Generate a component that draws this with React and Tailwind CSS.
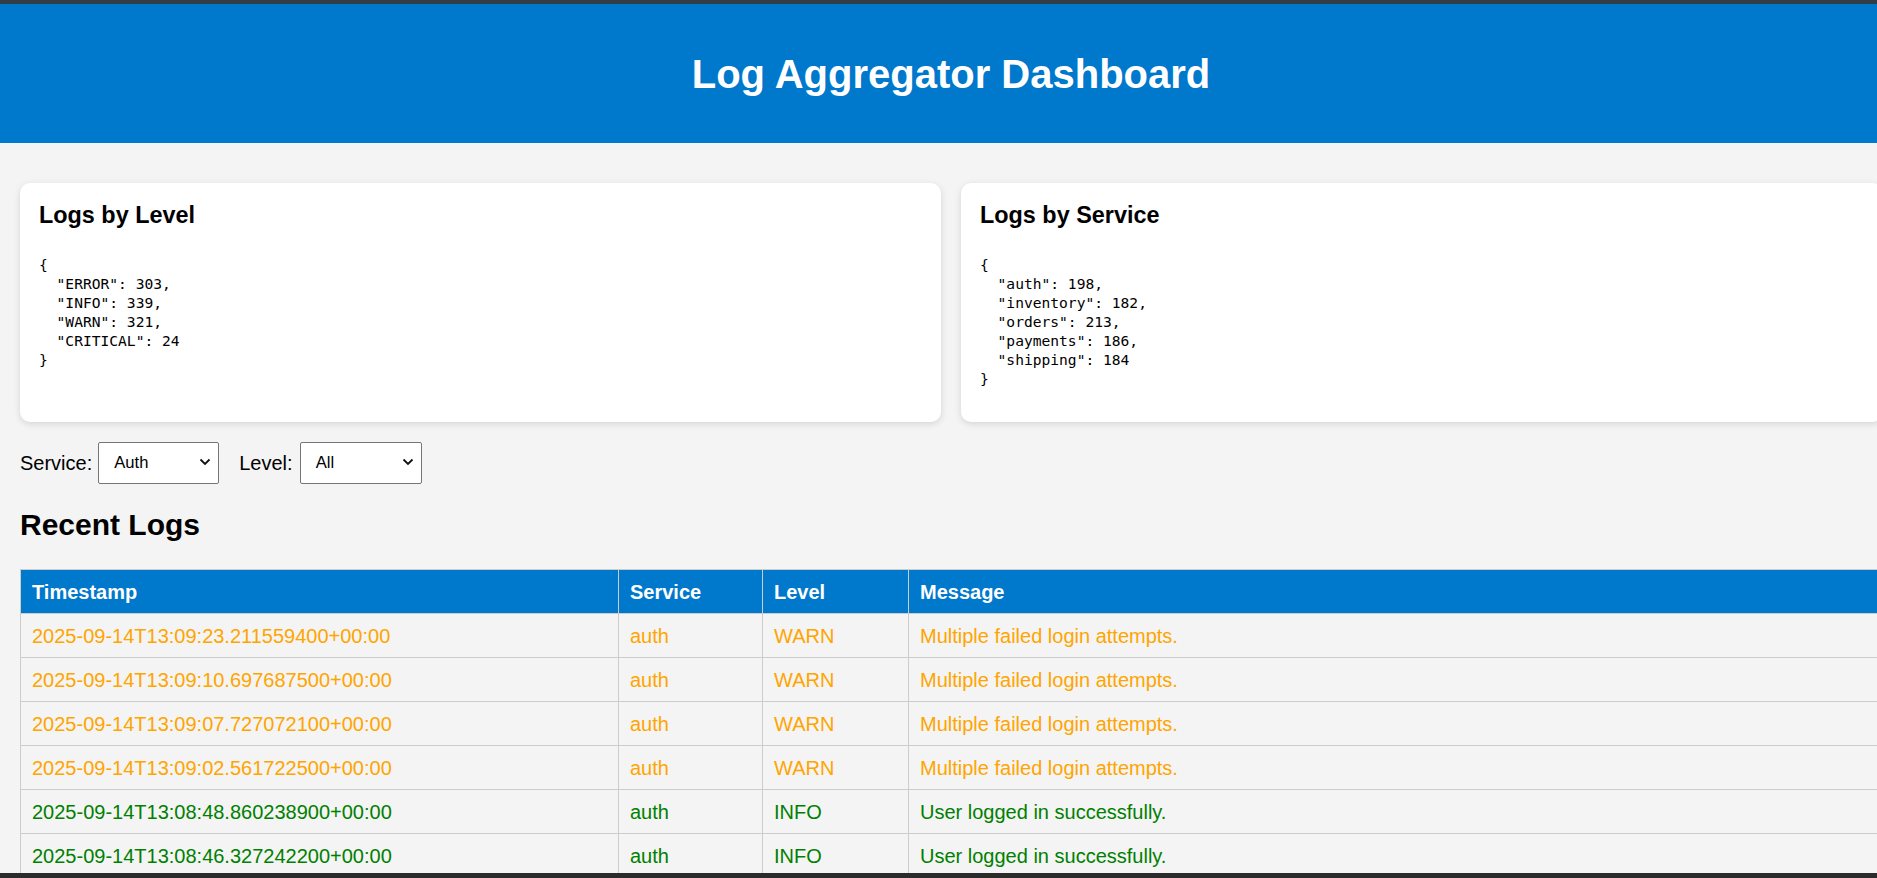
import React from 'react';

const levelCounts = { ERROR: 303, INFO: 339, WARN: 321, CRITICAL: 24 };
const serviceCounts = { auth: 198, inventory: 182, orders: 213, payments: 186, shipping: 184 };

const logs = [
  { ts: '2025-09-14T13:09:23.211559400+00:00', service: 'auth', level: 'WARN', message: 'Multiple failed login attempts.' },
  { ts: '2025-09-14T13:09:10.697687500+00:00', service: 'auth', level: 'WARN', message: 'Multiple failed login attempts.' },
  { ts: '2025-09-14T13:09:07.727072100+00:00', service: 'auth', level: 'WARN', message: 'Multiple failed login attempts.' },
  { ts: '2025-09-14T13:09:02.561722500+00:00', service: 'auth', level: 'WARN', message: 'Multiple failed login attempts.' },
  { ts: '2025-09-14T13:08:48.860238900+00:00', service: 'auth', level: 'INFO', message: 'User logged in successfully.' },
  { ts: '2025-09-14T13:08:46.327242200+00:00', service: 'auth', level: 'INFO', message: 'User logged in successfully.' },
];

const levelColor = {
  WARN: 'text-[#ffa500]',
  INFO: 'text-[#008000]',
  ERROR: 'text-[#ff0000]',
  CRITICAL: 'text-[#8b0000]',
};

const StatCard = ({ title, data }) => (
  <div className="bg-white rounded-[10px] shadow-[0_2px_7px_rgba(0,0,0,0.13)] pt-[19px] px-[19px] pb-[34px]">
    <h3 className="text-[23.4px] leading-[26px] font-bold text-black">{title}</h3>
    <pre className="mt-[27px] font-['DejaVu_Sans_Mono',monospace] text-[14.6px] leading-[19px] text-black">
      {JSON.stringify(data, null, 2)}
    </pre>
  </div>
);

const Select = ({ value, width }) => (
  <div className={`relative h-[42px] ${width}`}>
    <div className="h-full w-full bg-white border border-[#767676] rounded-[2px] flex items-center pl-[15px] text-[16.6px] text-black">
      {value}
    </div>
    <svg className="absolute right-[8px] top-[15px]" width="12" height="10" viewBox="0 0 12 10" fill="none">
      <path d="M1.5 2.5 L6 7 L10.5 2.5" stroke="#111" strokeWidth="1.8" />
    </svg>
  </div>
);

export default function App() {
  return (
    <div className="h-screen w-full overflow-hidden bg-[#f4f4f4] font-['Liberation_Sans',Arial,sans-serif] text-[20px] text-black">
      <div className="h-[4px] w-[1902px] bg-[#333e48]" />
      <header className="h-[139px] w-[1902px] bg-[#0078cc] flex items-center justify-center">
        <h1 className="text-[40px] font-bold text-white leading-none">Log Aggregator Dashboard</h1>
      </header>

      <main className="pt-[40px] pl-[20px] w-[1902px]">
        <div className="grid grid-cols-2 gap-[20px] w-[1862px]">
          <StatCard title="Logs by Level" data={levelCounts} />
          <StatCard title="Logs by Service" data={serviceCounts} />
        </div>

        <div className="mt-[20px] flex items-center h-[42px]">
          <span className="mr-[6px]">Service:</span>
          <Select value="Auth" width="w-[121px]" />
          <span className="ml-[20px] mr-[7px]">Level:</span>
          <Select value="All" width="w-[122px]" />
        </div>

        <h2 className="mt-[24px] text-[30px] leading-[34px] font-bold">Recent Logs</h2>

        <table className="mt-[27px] w-[1862px] border-collapse table-fixed">
          <colgroup>
            <col className="w-[598px]" />
            <col className="w-[144px]" />
            <col className="w-[146px]" />
            <col />
          </colgroup>
          <thead>
            <tr className="h-[44px] bg-[#0078cc] text-white">
              <th className="border border-[#cccccc] px-[11px] text-left font-bold">Timestamp</th>
              <th className="border border-[#cccccc] px-[11px] text-left font-bold">Service</th>
              <th className="border border-[#cccccc] px-[11px] text-left font-bold">Level</th>
              <th className="border border-[#cccccc] px-[11px] text-left font-bold">Message</th>
            </tr>
          </thead>
          <tbody>
            {logs.map((log) => (
              <tr key={log.ts} className={`h-[44px] bg-[#f4f4f4] ${levelColor[log.level]}`}>
                <td className="border border-[#cccccc] px-[11px]">{log.ts}</td>
                <td className="border border-[#cccccc] px-[11px]">{log.service}</td>
                <td className="border border-[#cccccc] px-[11px]">{log.level}</td>
                <td className="border border-[#cccccc] px-[11px]">{log.message}</td>
              </tr>
            ))}
          </tbody>
        </table>
      </main>

      <div className="fixed bottom-0 left-0 right-0 h-[5px] bg-[#2b2b2b]" />
    </div>
  );
}
